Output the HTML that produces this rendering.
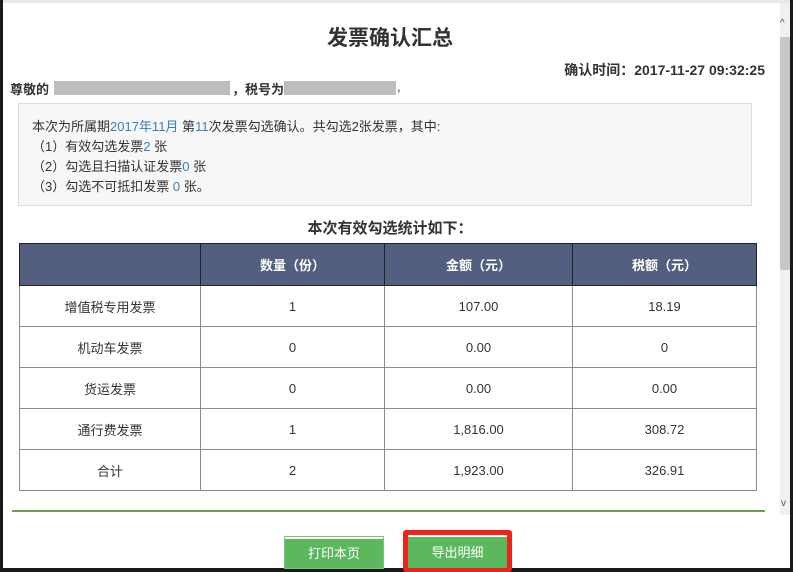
<!DOCTYPE html>
<html><head><meta charset="utf-8"><style>
*{margin:0;padding:0;box-sizing:border-box}
html,body{width:793px;height:572px;overflow:hidden;background:#fff}
body{position:relative;font-family:"Liberation Sans","Noto Sans CJK SC",sans-serif;color:#333}
.abs{position:absolute}
.blue{color:#3a7fb8}
table{position:absolute;left:19px;top:243px;width:738px;border-collapse:collapse;font-size:13px}
td,th{border:1px solid #8a8a8a;text-align:center;height:41px}
th{background:#535f7f;color:#fff;font-weight:bold;height:42px;border-color:#222}
</style></head><body>
<div class="abs" style="left:0;top:0;width:3px;height:572px;background:#1a1a1a"></div>
<div class="abs" style="left:0;top:568px;width:793px;height:4px;background:#1a1a1a"></div>
<div class="abs" style="left:790px;top:0;width:3px;height:572px;background:#1a1a1a"></div>
<div class="abs" style="left:3px;top:0;width:787px;height:3px;background:#e8e8e8"></div>
<div class="abs" style="left:780px;top:3px;width:10px;height:512px;background:#f0f0f0"></div>
<div class="abs" style="left:780px;top:37px;width:10px;height:233px;background:#c8c8c8"></div>
<div class="abs" style="left:780px;top:18px;font-size:10px;color:#555">^</div>
<div class="abs" style="left:781px;top:498px;font-size:10px;color:#555">v</div>

<div class="abs" style="left:0;width:780px;top:22px;text-align:center;font-size:21px;font-weight:bold;color:#333">发票确认汇总</div>
<div class="abs" style="right:28px;top:60px;font-size:14px;font-weight:bold;color:#333">确认时间：2017-11-27 09:32:25</div>
<div class="abs" style="left:10px;top:79px;font-size:13px;font-weight:bold">尊敬的</div>
<div class="abs" style="left:54px;top:81px;width:176px;height:14px;background:#bdbdbd"></div>
<div class="abs" style="left:232px;top:79px;font-size:13px;font-weight:bold">，税号为</div>
<div class="abs" style="left:284px;top:81px;width:112px;height:14px;background:#bdbdbd"></div>
<div class="abs" style="left:397px;top:79px;font-size:13px">,</div>

<div class="abs" style="left:18px;top:103px;width:734px;height:103px;background:#f7f7f7;border:1px solid #ddd"></div>
<div class="abs" style="left:32px;top:117px;font-size:13px;line-height:20px;color:#333">
本次为所属期<span class="blue">2017年11月</span> 第<span class="blue">11</span>次发票勾选确认。共勾选2张发票，其中:<br>
（1）有效勾选发票<span class="blue">2</span> 张<br>
（2）勾选且扫描认证发票<span class="blue">0</span> 张<br>
（3）勾选不可抵扣发票 <span class="blue">0</span> 张。</div>

<div class="abs" style="left:0;width:780px;top:217px;text-align:center;font-size:15px;font-weight:bold">本次有效勾选统计如下：</div>

<table>
<tr><th style="width:181px"></th><th style="width:184px">数量（份）</th><th style="width:188px">金额（元）</th><th>税额（元）</th></tr>
<tr><td>增值税专用发票</td><td>1</td><td>107.00</td><td>18.19</td></tr>
<tr><td>机动车发票</td><td>0</td><td>0.00</td><td>0</td></tr>
<tr><td>货运发票</td><td>0</td><td>0.00</td><td>0.00</td></tr>
<tr><td>通行费发票</td><td>1</td><td>1,816.00</td><td>308.72</td></tr>
<tr><td>合计</td><td>2</td><td>1,923.00</td><td>326.91</td></tr>
</table>

<div class="abs" style="left:12px;top:510px;width:753px;height:2px;background:#6a9e54"></div>

<div class="abs" style="left:285px;top:537px;width:98px;height:31px;background:#5cb85c;border-top:2px solid #fff;outline:1px solid #7fc07f;color:#fff;font-size:13px;text-align:center;line-height:30px">打印本页</div>
<div class="abs" style="left:403px;top:530px;width:109px;height:42px;background:#f0231c;border-radius:3px"></div>
<div class="abs" style="left:408px;top:535px;width:99px;height:33px;background:#5cb85c;border-top:2px solid #fff;color:#fff;font-size:13px;text-align:center;line-height:32px">导出明细</div>
</body></html>
